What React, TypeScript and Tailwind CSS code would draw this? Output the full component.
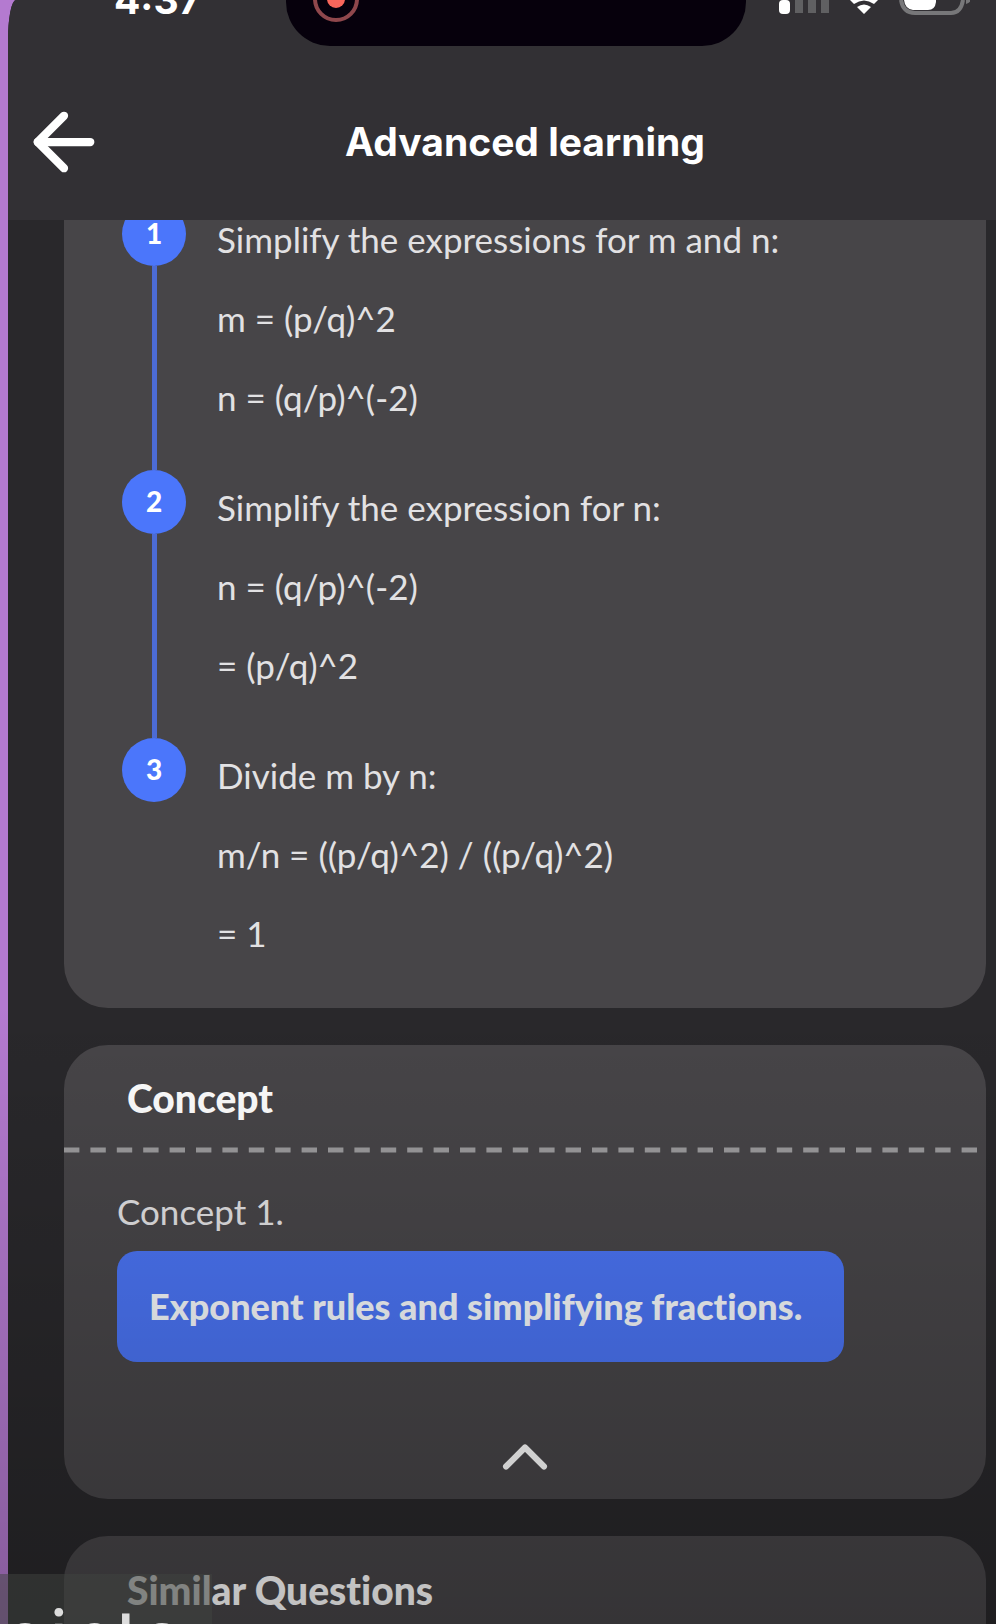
import { ArrowLeft, ChevronUp } from "lucide-react";

const steps = [
  { id: 1, lines: ["Simplify the expressions for m and n:", "m = (p/q)^2", "n = (q/p)^(-2)"] },
  { id: 2, lines: ["Simplify the expression for n:", "n = (q/p)^(-2)", "= (p/q)^2"] },
  { id: 3, lines: ["Divide m by n:", "m/n = ((p/q)^2) / ((p/q)^2)", "= 1"] },
];

function StatusBar() {
  return (
    <div className="flex h-[46px] items-start justify-between overflow-hidden pl-[106px] pr-[26px]">
      <div className="-mt-[24px] w-[172px] font-[Inter] text-[39px] leading-[48px] font-bold text-white">4:37</div>
      <div className="flex h-[46px] flex-1 rounded-b-[44px] bg-[#06000c] pl-[26px]">
        <svg className="h-[24px] w-[48px]" viewBox="0 0 48 24" aria-label="Recording">
          <circle cx="24" cy="-1" r="21" fill="none" stroke="#8f474c" strokeWidth="4" />
          <circle cx="24" cy="-1" r="9" fill="#f9665b" />
        </svg>
      </div>
      <svg className="ml-[24px] h-[20px] w-[200px] shrink-0" viewBox="0 0 200 20" aria-label="Signal, Wi-Fi and battery">
        <rect x="9" y="0" width="11" height="14" rx="4" fill="#fff" />
        <path d="M25 0h8v13h-8zM38 0h8v13h-8zM51 0h8v13h-8z" fill="#606062" />
        <path d="M80 0h28l-4 4q-10-7-20 0z M87 7q7-5 14 0l-7 7z" fill="#fff" />
        <path d="M131 0Q133 13 145 13H181Q191 13 193 0" fill="none" stroke="#777779" strokeWidth="4" />
        <path d="M134 0H166V2Q165 10 158 10H143Q135 9 134 0z" fill="#fff" />
        <path d="M196 0h5q-1 3-5 4z" fill="#777779" />
      </svg>
    </div>
  );
}

export default function App() {
  return (
    <div className="relative h-screen overflow-hidden bg-[#b47ad0] pl-2 font-[Lato,sans-serif] [font-variant-ligatures:no-common-ligatures]">
      <div className="flex h-full flex-col overflow-hidden bg-[#29282b] [border-top-left-radius:8px_40px]">
        <header className="h-[220px] shrink-0 bg-[#323034]">
          <StatusBar />
          <div className="grid grid-cols-[92px_1fr_57px] items-center pt-[50px] pl-[11px]">
            <button aria-label="Back" className="flex h-[92px] items-center text-white">
              <ArrowLeft className="h-[90px] w-[90px] shrink-0" strokeWidth={2.2} />
            </button>
            <h1 className="text-center font-[Inter] text-[39px] leading-[40px] font-bold text-white">Advanced learning</h1>
          </div>
        </header>

        <main className="flex flex-1 flex-col gap-[37px] overflow-hidden pr-[10px] pl-[56px]">
          <section className="shrink-0 rounded-b-[44px] bg-[#474548] pb-[35px]">
            <ol className="-mt-[18px] pl-[58px] [clip-path:inset(18px_0_0_0)]">
              {steps.map((step, i) => (
                <li key={step.id} className="flex gap-[31px]">
                  <div className="flex w-16 flex-col items-center">
                    <span className="flex h-16 w-16 shrink-0 items-center justify-center rounded-full bg-[#4b76fb] pb-[2px] text-[28px] font-black text-white">
                      {step.id}
                    </span>
                    {i < steps.length - 1 && <span className="w-[5px] flex-1 bg-[#4c6bd4]" />}
                  </div>
                  <div className={i < steps.length - 1 ? "-mt-[2px] pb-[33px] text-[35px] leading-[79px] text-[#e2e1e3]" : "-mt-[2px] text-[35px] leading-[79px] text-[#e2e1e3]"}>
                    {step.lines.map((line) => (
                      <p key={line}>{line}</p>
                    ))}
                  </div>
                </li>
              ))}
            </ol>
          </section>

          <section className="shrink-0 rounded-[44px] bg-[#474548]">
            <h2 className="px-[63px] pt-[31px] pb-[27px] text-[39px] leading-[44px] font-black text-white">Concept</h2>
            <svg className="h-[6px] w-full" aria-hidden="true">
              <line x1="0" y1="3" x2="914" y2="3" stroke="#9c9b9d" strokeWidth="5" strokeDasharray="15.4 11" />
            </svg>
            <div className="px-[53px] pt-[36px]">
              <p className="text-[35px] leading-[44px] text-[#e2e1e3]">Concept 1.</p>
              <button className="mt-[18px] rounded-[20px] bg-[#4a73f2] py-[32px] pr-[42px] pl-[32px] text-[36px] leading-[47px] font-black text-[#f4f7fa]">
                Exponent rules and simplifying fractions.
              </button>
            </div>
            <div className="flex justify-center pt-[57px] pb-[4px]">
              <button aria-label="Collapse" className="text-white">
                <ChevronUp className="h-[76px] w-[76px]" strokeWidth={1.9} />
              </button>
            </div>
          </section>

          <section className="h-[200px] shrink-0 rounded-[44px] bg-[#474548]">
            <h2 className="px-[63px] pt-[32px] text-[39px] leading-[44px] font-black text-white">Similar Questions</h2>
          </section>
        </main>
      </div>

      <div className="pointer-events-none absolute inset-x-0 bottom-0 h-[620px] bg-gradient-to-b from-black/0 to-black/25" />
      <div className="absolute bottom-0 left-0 h-[50px] w-[212px] overflow-hidden bg-[#404340]/50 font-[Roboto] text-[82px] leading-[82px] text-[#dcdcdc]">
        <p className="pt-[24px] pr-[29px] text-right">oints</p>
      </div>
    </div>
  );
}
